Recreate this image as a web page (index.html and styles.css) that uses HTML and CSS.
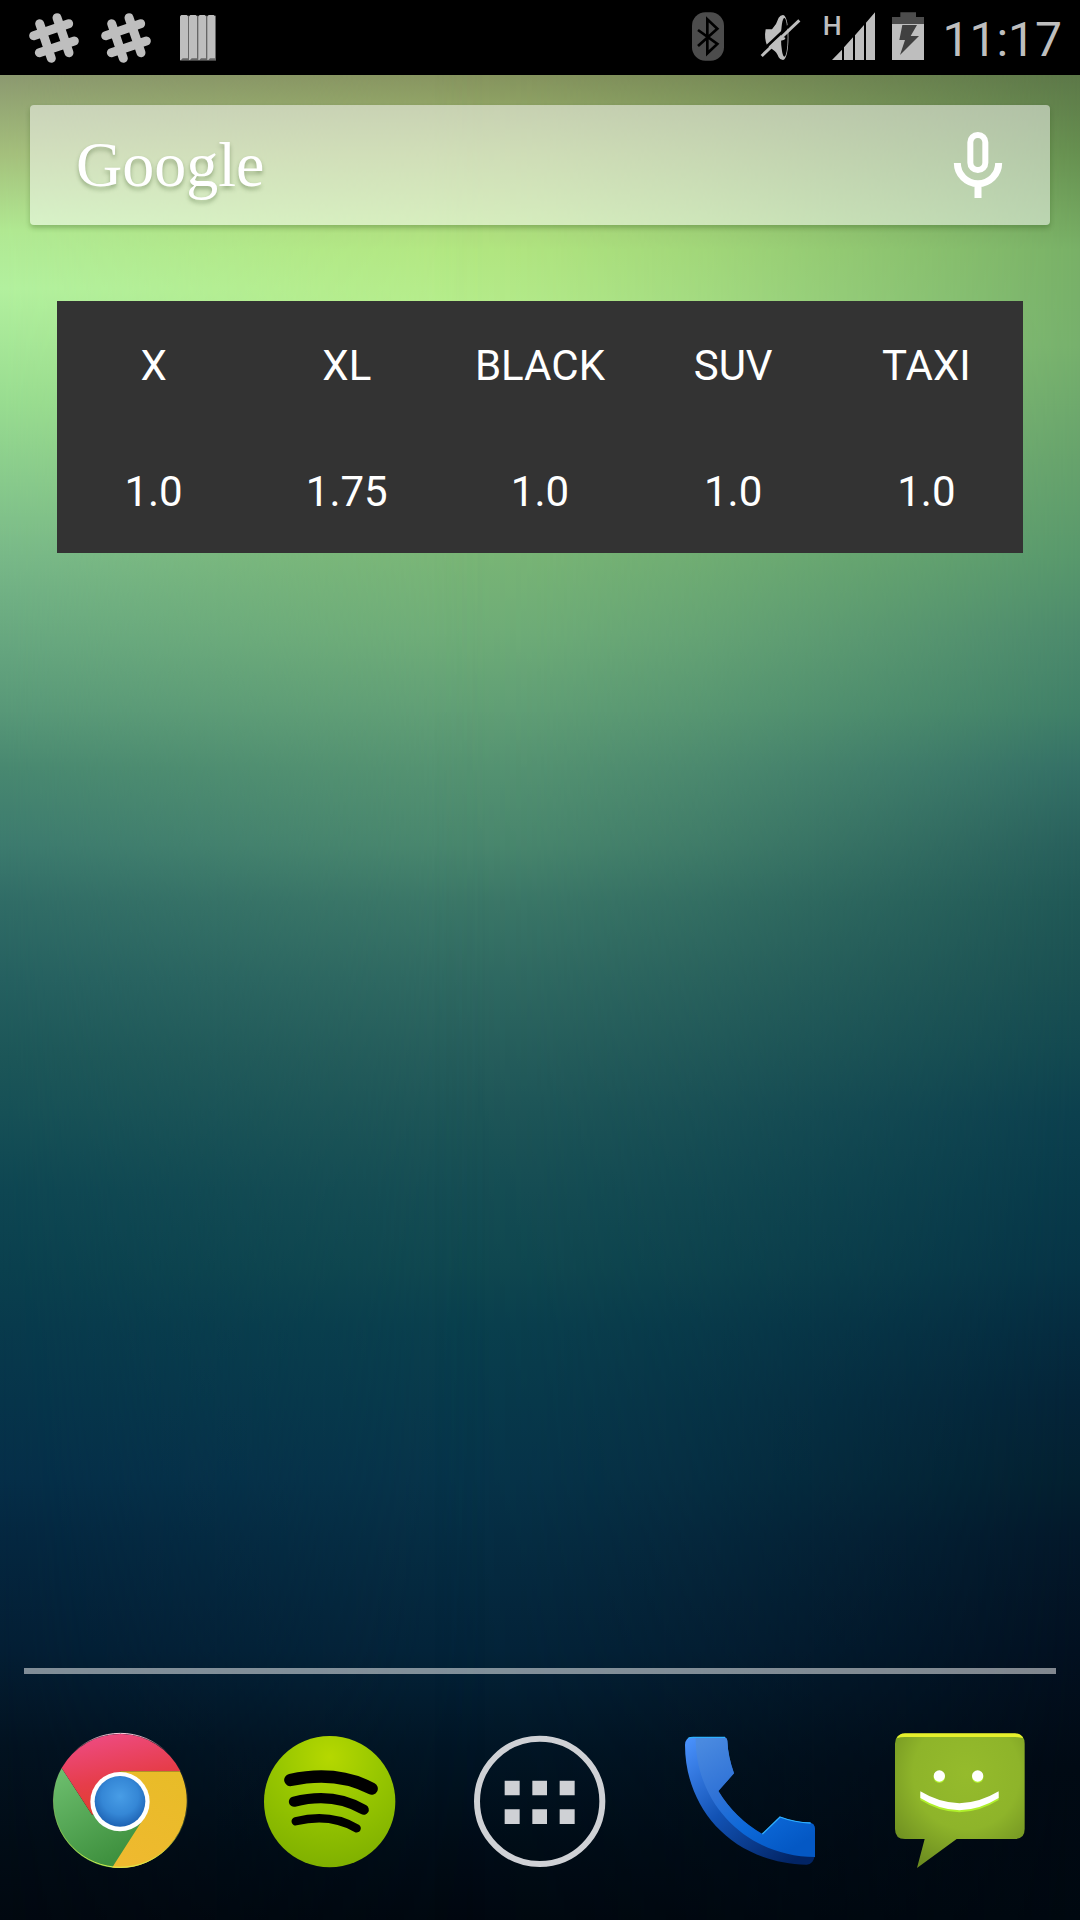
FILE: index.html
```html
<!DOCTYPE html>
<html lang="en">
<head>
<meta charset="utf-8">
<meta name="viewport" content="width=device-width, initial-scale=1">
<title>Home</title>
<link rel="stylesheet" href="styles.css">
</head>
<body class="home">
<header class="status">
  <div class="status-group">
    <svg class="status-icon" viewBox="54 0 216 225" aria-hidden="true"><path class="hash" d="M119 71L154 175M171 53L207 158M101 107L206 71M118 158L223 123"/></svg>
    <svg class="status-icon" viewBox="54 0 216 225" aria-hidden="true"><path class="hash" d="M119 71L154 175M171 53L207 158M101 107L206 71M118 158L223 123"/></svg>
    <svg class="status-icon" viewBox="486 0 216 225" aria-hidden="true">
      <rect x="540" y="47" width="108" height="135" fill="#666"/>
      <path fill="#bebebe" d="M540 50l4-5h16l4 4v126h-16l-5 5h-3zM567 50l4-5h16l4 4v126h-16l-5 5h-3zM595 50l4-5h15l4 4v126h-15l-5 5h-3zM622 50l4-5h15l4 4v126h-15l-5 5h-3z"/>
    </svg>
  </div>
  <div class="status-group">
    <svg class="status-icon" viewBox="36 0 216 225" aria-hidden="true">
      <rect x="96" y="37" width="96" height="145" rx="40" fill="#4c4c4c"/>
      <path d="M114 90L172 132L142 160V58L172 86L114 138" fill="none" stroke="#000" stroke-width="8"/>
    </svg>
    <svg class="status-icon" viewBox="252 0 216 225" aria-hidden="true">
      <path fill="#bebebe" d="M317 88h19q14-15 20-35q5-8 13-8c22 0 22 135 0 135q-9 0-13-8q-6-16-16-22l-19-14q-9-22-4-48z"/>
      <ellipse cx="373" cy="112" rx="10" ry="58" fill="#000"/>
      <path d="M362 110q14 0 14 5t-14 7z" fill="#bebebe"/>
      <path d="M298 160L412 53" stroke="#000" stroke-width="8"/>
      <path d="M305 168L418 61" stroke="#bebebe" stroke-width="9"/>
    </svg>
    <svg class="status-icon signal" viewBox="468 0 192 225" role="img" aria-label="H network">
      <text class="network" x="517" y="105">H</text>
      <path fill="#bebebe" d="M516 180L546 149V180zM552 180V142L579 112V180zM585 180V106L612 75V180zM618 180V68L645 37V180z"/>
    </svg>
    <svg class="status-icon battery" viewBox="660 0 168 225" aria-hidden="true">
      <path fill="#4c4c4c" d="M696 51h25V37h47v14h24v21h-96z"/>
      <path fill="#bebebe" d="M696 72h96v108h-96z"/>
      <path fill="#404040" d="M727 75h44l-19 33h25l-57 57 15-45h-17z"/>
    </svg>
    <time class="clock">11:17</time>
  </div>
</header>
<main class="desktop">
  <form class="search" role="search">
    <button class="search-logo" type="button">Google</button>
    <button class="search-voice" type="button" aria-label="Voice search">
      <svg class="mic" viewBox="876 390 156 210" aria-hidden="true">
        <rect x="931" y="405" width="45" height="105" rx="22" fill="none" stroke="#fff" stroke-width="18"/>
        <path d="M892 489a62 62 0 0 0 124 0M954 550v44" fill="none" stroke="#fff" stroke-width="21"/>
      </svg>
    </button>
  </form>
  <table class="rates">
    <thead><tr><th scope="col">X</th><th scope="col">XL</th><th scope="col">BLACK</th><th scope="col">SUV</th><th scope="col">TAXI</th></tr></thead>
    <tbody><tr><td>1.0</td><td>1.75</td><td>1.0</td><td>1.0</td><td>1.0</td></tr></tbody>
  </table>
</main>
<nav class="dock" aria-label="Favorites">
  <button class="app" type="button" aria-label="Chrome">
    <svg class="app-icon" viewBox="144 267 432 432" aria-hidden="true">
      <defs>
        <linearGradient id="red" x1="0.3" y1="0" x2="0.6" y2="1"><stop offset="0" stop-color="#ee4b82"/><stop offset=".55" stop-color="#e63d4a"/><stop offset="1" stop-color="#e04028"/></linearGradient>
        <linearGradient id="green" x1="0" y1="0" x2=".5" y2="1"><stop offset="0" stop-color="#6fc070"/><stop offset="1" stop-color="#3f913f"/></linearGradient>
        <linearGradient id="yellow" x1="0.8" y1="0" x2=".3" y2="1"><stop offset="0" stop-color="#e8bc28"/><stop offset="1" stop-color="#efb92f"/></linearGradient>
        <radialGradient id="blue" cx=".5" cy=".4" r=".6"><stop offset="0" stop-color="#489de6"/><stop offset=".6" stop-color="#3587d6"/><stop offset="1" stop-color="#1e63b4"/></radialGradient>
        <linearGradient id="rim" x1="0" y1="0" x2="0" y2="1"><stop offset="0" stop-color="#ffd0e0"/><stop offset=".15" stop-color="#f08080" stop-opacity="0"/><stop offset=".7" stop-color="#c8e040" stop-opacity=".3"/><stop offset="1" stop-color="#d8f050"/></linearGradient>
      </defs>
      <path fill="url(#yellow)" d="M360 394H540A202 202 0 0 1 336 683L400 545z"/>
      <path fill="url(#green)" d="M185 384A202 202 0 0 0 336 683L424 546L360 486L276 524z"/>
      <path fill="url(#red)" d="M185 384A202 202 0 0 1 541 393H360V486L276 524z"/>
      <circle cx="361" cy="481" r="201" fill="none" stroke="url(#rim)" stroke-width="3"/>
      <circle cx="360" cy="485" r="89" fill="#fff"/>
      <circle cx="360" cy="484" r="76" fill="url(#blue)"/>
    </svg>
  </button>
  <button class="app" type="button" aria-label="Spotify">
    <svg class="app-icon" viewBox="774 267 432 432" aria-hidden="true">
      <defs><radialGradient id="lime" cx=".5" cy=".16" r=".85"><stop offset="0" stop-color="#b5d800"/><stop offset=".45" stop-color="#98c700"/><stop offset="1" stop-color="#7fb000"/></radialGradient></defs>
      <circle cx="989" cy="485" r="197" fill="url(#lime)"/>
      <g fill="none" stroke="#000" stroke-linecap="round">
        <path stroke-width="37" d="M871 420Q1010 390 1115 446"/>
        <path stroke-width="31" d="M882 485Q1000 455 1091 509"/>
        <path stroke-width="25" d="M887 544Q990 518 1070 565"/>
      </g>
    </svg>
  </button>
  <button class="app" type="button" aria-label="All apps">
    <svg class="app-icon" viewBox="144 267 432 432" aria-hidden="true">
      <circle cx="359" cy="484" r="188" fill="none" stroke="#cfd1d5" stroke-width="18"/>
      <path fill="#cfd1d5" d="M254 422h45v44h-45zM337 422h44v44h-44zM419 422h45v44h-45zM254 508h45v44h-45zM337 508h44v44h-44zM419 508h45v44h-45z"/>
    </svg>
  </button>
  <button class="app" type="button" aria-label="Phone">
    <svg class="app-icon" viewBox="54 267 432 432" aria-hidden="true">
      <defs>
        <linearGradient id="handset" x1=".1" y1="0" x2=".7" y2="1"><stop offset="0" stop-color="#4a8ae0"/><stop offset=".4" stop-color="#2f72d6"/><stop offset=".7" stop-color="#0c68d8"/><stop offset="1" stop-color="#0458c4"/></linearGradient>
        <linearGradient id="handset-edge" x1="0" y1="0" x2=".8" y2="1"><stop offset="0" stop-color="#4c94ff"/><stop offset=".5" stop-color="#1252b4"/><stop offset="1" stop-color="#022464"/></linearGradient>
      </defs>
      <path fill="url(#handset-edge)" d="M96 291H190Q201 291 202 303Q204 350 222 400L175 453Q225 535 307 582L360 530Q405 547 450 548Q464 550 465 566V645Q460 674 440 674C210 668 75 500 75 315Q76 292 96 291z"/>
      <path fill="url(#handset)" d="M107 292H190Q201 292 202 303Q204 350 222 400L175 453Q225 535 307 582L360 530Q405 547 450 548Q464 550 465 566V651C260 650 105 490 107 292z"/>
      <path d="M84 296Q90 292 100 292H195M307 582L360 531Q405 548 452 549" fill="none" stroke="#2fb0ff" stroke-width="4"/>
    </svg>
  </button>
  <button class="app" type="button" aria-label="Messaging">
    <svg class="app-icon" viewBox="684 267 432 432" aria-hidden="true">
      <defs>
        <radialGradient id="bubble" cx=".55" cy=".3" r=".75"><stop offset="0" stop-color="#95bb2c"/><stop offset=".55" stop-color="#8eb42a"/><stop offset="1" stop-color="#6c8c20"/></radialGradient>
      </defs>
      <path fill="url(#bubble)" d="M735 281H1065Q1094 281 1094 311V567Q1094 597 1064 597H890L771 684L794 597H735Q705 597 705 567V311Q705 281 735 281z"/>
      <path fill="#e6f02c" d="M710 295Q718 280 735 280H1065Q1082 280 1090 295Q1080 291 1065 291H735Q720 291 710 295z"/>
      <g fill="#b0f02c"><circle cx="838" cy="412" r="17"/><circle cx="953" cy="412" r="17"/><path d="M781 459Q898 527 1016 459V480Q898 553 781 480z"/></g>
      <g fill="#fff"><circle cx="838" cy="408" r="17"/><circle cx="953" cy="408" r="17"/><path d="M781 454Q898 525 1016 454V474Q898 547 781 474z"/></g>
    </svg>
  </button>
</nav>
</body>
</html>
```
FILE: styles.css
```css
* {
  box-sizing: border-box;
}

.home {
  position: relative;
  isolation: isolate;
  display: flex;
  flex-direction: column;
  min-height: 100vh;
  margin: 0;
  color: #fff;
  font-family: Roboto, "Noto Sans", sans-serif;
  background: linear-gradient(#889660 4%, #a2bd70 8%, #b4e882 13%, #b7ee8c 16%, #a0d882 21%, #7ab676 29%, #70ae78 33%, #62a076 37%, #569472 40%, #4a886e 44%, #3c7868 47%, #306a62 51%, #265e5c 55%, #1e5658 58%, #164e54 62%, #104850 66%, #0a404e 69%, #083a4c 73%, #07344a 77%, #062e44 80%, #04243a 86%, #021626 91%, #010d18 96%, #010810);
}

/* The wallpaper's colour shifts towards the left and right edges. */
.home::before,
.home::after {
  content: "";
  position: absolute;
  inset: 0;
  z-index: -1;
}

.home::before {
  background: linear-gradient(#8c9a70 4%, #a4bf7c 8%, #b0e892 12%, #b2f09e 15%, #98dc90 21%, #78b888 29%, #68a880 33%, #589878 37%, #488870 40%, #3c7a6e 44%, #306c66 47%, #256060 51%, #1c5658 55%, #165056 58%, #0e4652 62%, #0a404e 66%, #083a4c 69%, #06344a 73%, #052e48 77%, #042740 80%, #031e34 86%, #021220 91%, #010c16 96%, #010810);
  mask-image: linear-gradient(90deg, #000, rgb(0 0 0 / 70%) 12%, rgb(0 0 0 / 25%) 30%, transparent 45%);
}

.home::after {
  background: linear-gradient(#5c7848 4%, #669050 8%, #78b066 13%, #76b06c 18%, #66a26c 24%, #58986c 29%, #4c8a6c 33%, #408068 37%, #347066 40%, #28605c 44%, #205856 47%, #1a5052 51%, #124850 55%, #0c404e 58%, #083a4a 62%, #063446 66%, #052c40 69%, #042438 73%, #032030 77%, #03182a 80%, #021020 86%, #010a14 92%, #000810);
  mask-image: linear-gradient(270deg, #000, rgb(0 0 0 / 75%) 12%, rgb(0 0 0 / 30%) 35%, rgb(0 0 0 / 8%) 50%, transparent 60%);
}

.status {
  display: flex;
  justify-content: space-between;
  height: 75px;
  padding: 0 18px;
  background: #000;
  color: #bebebe;
}

.status-group {
  display: flex;
  align-items: center;
}

.status-icon {
  width: 72px;
  height: 75px;
}

.signal {
  width: 64px;
}

.battery {
  width: 56px;
}

.hash {
  fill: none;
  stroke: #bebebe;
  stroke-width: 27px;
  stroke-linecap: round;
}

.network {
  fill: #bebebe;
  font-size: 80px;
  font-weight: 500;
  text-anchor: middle;
}

.clock {
  margin-left: 6px;
  padding-top: 4px;
  font-size: 48px;
  line-height: 60px;
}

.desktop {
  flex: 1;
  padding: 30px 30px 60px;
}

.search {
  display: flex;
  align-items: center;
  justify-content: space-between;
  height: 120px;
  padding: 0 46px;
  border-radius: 4px;
  background: rgb(255 255 255 / 50%);
  box-shadow: 0 3px 5px rgb(40 80 20 / 30%);
}

.search-logo,
.search-voice,
.app {
  padding: 0;
  border: 0;
  background: none;
  color: inherit;
}

.search-logo {
  font-family: "Liberation Serif", serif;
  font-size: 64px;
  line-height: 72px;
  text-shadow: 0 3px 4px rgb(60 90 40 / 40%);
}

.search-voice {
  display: flex;
}

.mic {
  width: 52px;
  height: 70px;
}

.rates {
  width: calc(100% - 54px);
  margin: 76px 27px 0;
  table-layout: fixed;
  border-collapse: collapse;
  background: #333;
  font-size: 42px;
  line-height: 50px;
  text-align: center;
}

.rates th,
.rates td {
  height: 126px;
  padding: 4px 0 0;
  font-weight: 400;
}

.dock {
  display: grid;
  grid-template-columns: repeat(5, 1fr);
  padding: 61px 15px 47px;
  background: linear-gradient(rgb(255 255 255 / 50%), rgb(255 255 255 / 50%)) center top / calc(100% - 48px) 6px no-repeat;
}

.app {
  display: flex;
  justify-content: center;
}

.app-icon {
  width: 144px;
  height: 144px;
}
```
